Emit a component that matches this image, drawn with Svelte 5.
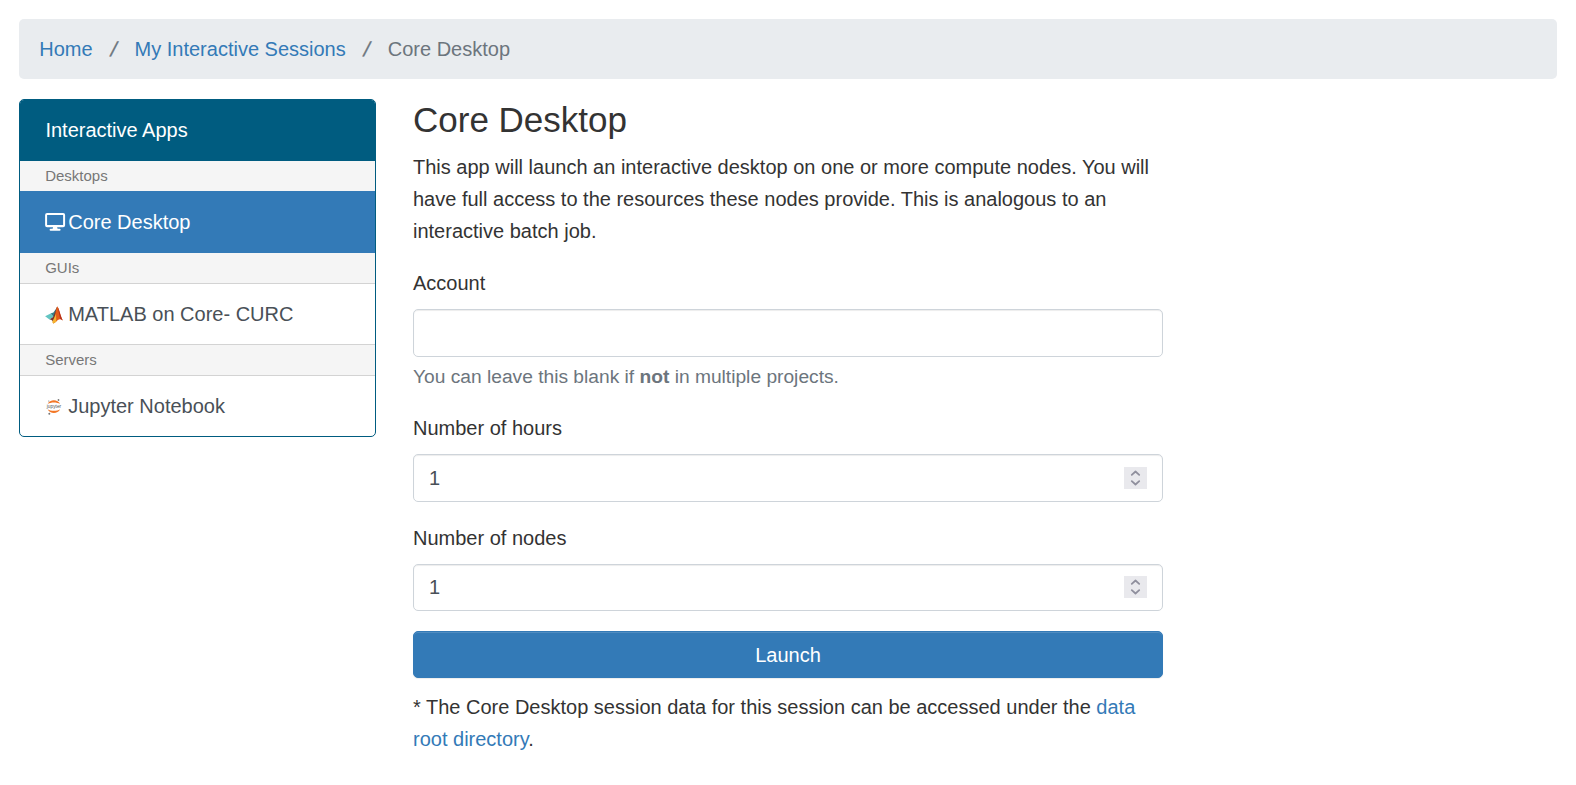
<script>
  const crumbs = ['Home', 'My Interactive Sessions'];
  let account = $state('');
  let hours = $state('1');
  let nodes = $state('1');
</script>

{#snippet stepper()}
  <span class="stepper" aria-hidden="true">
    <svg width="23" height="22" viewBox="0 0 23 22" fill="none" stroke="#8f8f9d" stroke-width="1.8" stroke-linecap="round" stroke-linejoin="round">
      <path d="M7.8 7.8 11.5 4.5 15.2 7.8M7.8 14.2 11.5 17.5 15.2 14.2" />
    </svg>
  </span>
{/snippet}

<nav class="breadcrumb">
  {#each crumbs as crumb}
    <a href="#top">{crumb}</a><span class="slash">/</span>
  {/each}
  <span>Core Desktop</span>
</nav>

<div class="row">
  <aside>
    <div class="card">
      <div class="header">Interactive Apps</div>
      <div class="group first">Desktops</div>
      <a class="item active" href="#top">
        <svg class="icon" width="23" height="20" viewBox="0 0 23 20">
          <path fill="#fff" fill-rule="evenodd" d="M2 1h16a2 2 0 0 1 2 2v10.200a2 2 0 0 1-2 2h-6l.5 1.600h2a1 1 0 0 1 0 2h-9a1 1 0 0 1 0-2h2l.5-1.600H2a2 2 0 0 1-2-2V3a2 2 0 0 1 2-2Zm0 2v10h16V3Z" />
        </svg>Core Desktop</a>
      <div class="group after-active">GUIs</div>
      <a class="item" href="#top">
        <svg class="icon" width="23" height="20" viewBox="0 0 23 20">
          <path fill="#63c5c2" d="M0 12.2 5.500 9.400 8.800 12.500 4.400 15.500Z" />
          <path fill="#397f86" d="m5.500 9.400 2.800-.8 3.600-5L9 13Z" />
          <path fill="#76352b" d="M4.400 15.500 8 13l4-10.500-.5 14-3 3C8 17 6.700 15.500 4.400 15.500Z" />
          <path fill="#e45b18" d="M12 2.300c2 2 3 8.700 5.700 14.200-2.400-2-4.600-1.500-6.700 1.300L8.300 19.600C9.800 13 10.500 7 12 2.300Z" />
          <path fill="#f5b22f" d="M10.900 10 7 18.200l1.500 1.400 2.700-1.800Z" />
          <path fill="#b5301c" d="M12.600 2.900c1.500 2.300 2.500 8.100 5.100 13.600l-2.700-1.700Z" />
        </svg>MATLAB on Core- CURC</a>
      <div class="group">Servers</div>
      <a class="item last" href="#top">
        <svg class="icon" width="23" height="20" viewBox="0 0 23 20">
          <path fill="#f37726" d="M2.600 8C4.800 3 12.800 3 15 8c-3.200-2-9.200-2-12.400 0ZM2.600 13.200c2.200 5 10.200 5 12.400 0-3.200 2-9.200 2-12.400 0Z" />
          <g fill="#777"><circle cx="13.400" cy="4" r=".9" /><circle cx="3.700" cy="5" r=".6" /><circle cx="4.200" cy="17.700" r="1" /></g>
          <text x="1.600" y="12" textLength="14.500" lengthAdjust="spacingAndGlyphs" font-size="4.800" fill="#555">jupyter</text>
        </svg>Jupyter Notebook</a>
    </div>
  </aside>

  <main>
    <h3>Core Desktop</h3>
    <p>This app will launch an interactive desktop on one or more compute nodes. You will have full access to the resources these nodes provide. This is analogous to an interactive batch job.</p>
    <form>
      <div class="field">
        <label for="account">Account</label>
        <div class="control"><input id="account" type="text" bind:value={account} /></div>
        <small>You can leave this blank if <strong>not</strong> in multiple projects.</small>
      </div>
      <div class="field">
        <label for="hours">Number of hours</label>
        <div class="control"><input id="hours" type="text" bind:value={hours} />{@render stepper()}</div>
      </div>
      <div class="field">
        <label for="nodes">Number of nodes</label>
        <div class="control short"><input id="nodes" type="text" bind:value={nodes} />{@render stepper()}</div>
      </div>
      <button type="button">Launch</button>
    </form>
    <p class="note">* The Core Desktop session data for this session can be accessed under the <a href="#top">data root directory</a>.</p>
  </main>
</div>

<style>
  :global(body) { margin: 0; background: #fff; color: #333; font: 20px/32px "Liberation Sans", Arial, sans-serif; }
  :global(*) { box-sizing: border-box; }
  a { color: #337ab7; text-decoration: none; }
  .breadcrumb { display: flex; align-items: center; height: 60px; margin: 19px 19px 20px; padding: 0 20px 0 20.2px; border-radius: 5px; background: #e9ecef; color: #6c757d; }
  .slash { width: 42px; text-align: center; -webkit-text-stroke: .4px #6c757d; transform: skewX(-14deg); }
  .row { display: flex; }
  aside { width: 395px; flex: none; padding: 0 19px; }
  main { width: 788px; flex: none; padding: 0 20px 0 18px; }
  .card { border: 1px solid #005c80; border-radius: 5px; overflow: hidden; height: 338px; }
  .header { height: 61px; padding: 14px 25.4px; line-height: 32px; background: #005c80; color: #fff; }
  .group { height: 32px; padding: 0 25.2px; line-height: 30px; font-size: 15px; color: #777; background: #f5f5f5; border: solid #d3d3d3; border-width: 1px 0; }
  .group.first { height: 30px; border: 0; }
  .group.after-active { height: 31px; border-top: 0; }
  .item { display: flex; align-items: center; height: 60px; padding: 0 25px; color: #495057; }
  .item.active { height: 62px; background: #337ab7; color: #fff; }
  .icon { flex: none; width: 23.2px; }
  h3 { margin: 0 0 10px; font-size: 35px; font-weight: 400; line-height: 42px; }
  p { margin: 0 0 20px; }
  .field { margin-bottom: 20px; }
  label { display: block; margin-bottom: 10px; }
  .control { position: relative; height: 48px; }
  .control.short { height: 47px; }
  input { display: block; width: 100%; height: 100%; padding: 0 15px; border: 1px solid #ced4da; border-radius: 5px; background: #fff; color: #495057; font: inherit; box-shadow: inset 0 1px 1px rgba(0, 0, 0, .075); outline: 0; }
  .stepper { position: absolute; right: 16px; top: 13px; width: 23px; height: 22px; background: #e9e9ed; }
  .short .stepper { top: 12px; }
  .stepper svg { display: block; }
  small { display: block; margin-top: 5px; font-size: 19.2px; line-height: 30px; color: #6c757d; }
  button { display: block; width: 100%; height: 47px; padding: 0; border: 1px solid #337ab7; border-radius: 5px; background: #337ab7; color: #fff; font: inherit; box-shadow: inset 0 1px 0 rgba(255, 255, 255, .15), 0 1px 1px rgba(0, 0, 0, .075); }
  .note { margin: 13px 0 0; }
</style>
